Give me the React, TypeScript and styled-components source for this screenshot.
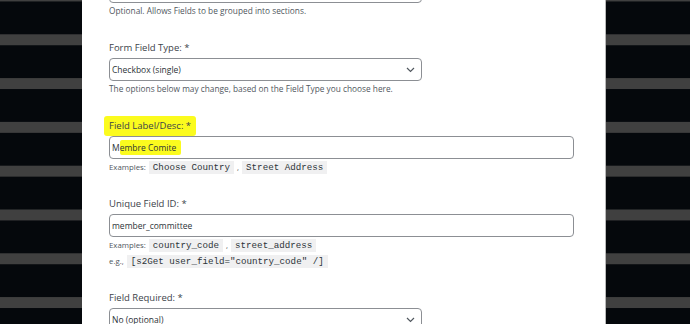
import React from 'react';
import styled, { createGlobalStyle } from 'styled-components';

const Global = createGlobalStyle`
  html, body { margin: 0; padding: 0; background: #05080c; }
  body { width: 690px; height: 324px; overflow: hidden; font-family: "Open Sans", "Noto Sans", sans-serif; }
`;

const Page = styled.div`
  display: flex;
  width: 690px;
  height: 324px;
  overflow: hidden;
`;

const Gutter = styled.div<{ $w?: number }>`
  flex: ${(p) => (p.$w ? `0 0 ${p.$w}px` : '1 1 auto')};
  background-color: #05080c;
  background-image: linear-gradient(to bottom, #404040 0, #404040 11.4px, transparent 11.4px);
  background-size: 100% 43.8px;
  background-position: 0 34.3px;
`;

const Panel = styled.main`
  flex: 0 0 524px;
  box-sizing: border-box;
  background: #fff;
  border-right: 1px solid #b9b9b9;
  padding-left: 27px;
`;

const Form = styled.div`
  display: flex;
  flex-direction: column;
  gap: 22px;
`;

const Group = styled.div<{ $first?: boolean }>`
  display: flex;
  flex-direction: column;
  align-items: flex-start;
  margin-top: ${(p) => (p.$first ? '-20px' : '0')};
`;

const Label = styled.div`
  font-size: 9.5px;
  line-height: 14px;
  color: #3c434a;
  margin-bottom: 3px;
  white-space: nowrap;
`;

const Marker = styled.span`
  background: #fbfb1e;
  padding: 3px 5px 4px;
  margin: 0 -5px;
  border-radius: 3px;
`;

const Box = styled.div<{ $wide?: boolean }>`
  box-sizing: border-box;
  width: ${(p) => (p.$wide ? '465px' : '313px')};
  height: 23px;
  border: 1px solid #8c8f94;
  border-radius: 4px;
  background: #fff;
  display: flex;
  align-items: center;
  justify-content: space-between;
  padding: 0 6px 0 2px;
  font-size: 8.5px;
  color: #2c3338;
  white-space: nowrap;
`;

const InlineMark = styled.span`
  background: #fbfb1e;
  padding: 2px 5px 2px 0;
  border-radius: 2px;
`;

const Desc = styled.div`
  font-size: 8.3px;
  line-height: 16px;
  color: #50575e;
  white-space: nowrap;
`;

const Hint = styled.div`
  font-size: 7.8px;
  line-height: 16px;
  color: #50575e;
  white-space: nowrap;
  display: flex;
  align-items: center;
  gap: 3px;
`;

const Code = styled.code`
  font-family: "Liberation Mono", "DejaVu Sans Mono", monospace;
  font-size: 9.2px;
  line-height: 13px;
  background: #f0f0f1;
  color: #2c3338;
  padding: 0 4px;
`;

const Chevron = () => (
  <svg width="9" height="6" viewBox="0 0 9 6" fill="none">
    <polyline points="1,1 4.5,4.5 8,1" stroke="#50575e" strokeWidth="1.2" />
  </svg>
);

export default function App() {
  return (
    <>
      <Global />
      <Page>
        <Gutter $w={82} />
        <Panel>
          <Form>
            <Group $first>
              <Box>
                <span />
                <Chevron />
              </Box>
              <Desc>Optional. Allows Fields to be grouped into sections.</Desc>
            </Group>
            <Group>
              <Label>Form Field Type: *</Label>
              <Box>
                <span>Checkbox (single)</span>
                <Chevron />
              </Box>
              <Desc>The options below may change, based on the Field Type you choose here.</Desc>
            </Group>
            <Group>
              <Label>
                <Marker>Field Label/Desc: *</Marker>
              </Label>
              <Box $wide>
                <span>
                  M<InlineMark>embre Comite</InlineMark>
                </span>
              </Box>
              <Hint>
                Examples: <Code>Choose Country</Code>,<Code>Street Address</Code>
              </Hint>
            </Group>
            <Group>
              <Label>Unique Field ID: *</Label>
              <Box $wide>
                <span>member_committee</span>
              </Box>
              <Hint>
                Examples: <Code>country_code</Code>,<Code>street_address</Code>
              </Hint>
              <Hint>
                e.g., <Code>[s2Get user_field="country_code" /]</Code>
              </Hint>
            </Group>
            <Group>
              <Label>Field Required: *</Label>
              <Box>
                <span>No (optional)</span>
                <Chevron />
              </Box>
            </Group>
          </Form>
        </Panel>
        <Gutter />
      </Page>
    </>
  );
}
